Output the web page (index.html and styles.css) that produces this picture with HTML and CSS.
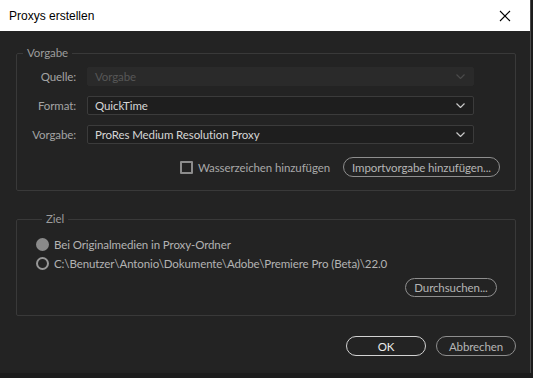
FILE: index.html
```html
<!DOCTYPE html>
<html lang="de">

<head>
    <meta name="viewport" content="width=device-width, initial-scale=1">
    <meta charset="utf-8">
    <link rel="stylesheet" href="styles.css">
</head>

<body>
    <div class="dialog">
        <div class="titlebar">
            <span class="title">Proxys erstellen</span>
            <svg class="close" width="12" height="12" viewBox="0 0 12 12">
                <path d="M1 1 L11 11 M11 1 L1 11" stroke="#000" stroke-width="1.1" fill="none" />
            </svg>
        </div>
        <div class="content">
            <fieldset class="group preset">
                <legend>Vorgabe</legend>
                <div class="rows">
                    <label class="lbl">Quelle:</label>
                    <div class="select disabled">
                        <span>Vorgabe</span>
                        <svg width="9" height="5" viewBox="0 0 9 5"><polyline points="0.5,0.5 4.5,4.5 8.5,0.5" /></svg>
                    </div>
                    <label class="lbl">Format:</label>
                    <div class="select">
                        <span>QuickTime</span>
                        <svg width="9" height="5" viewBox="0 0 9 5"><polyline points="0.5,0.5 4.5,4.5 8.5,0.5" /></svg>
                    </div>
                    <label class="lbl">Vorgabe:</label>
                    <div class="select">
                        <span>ProRes Medium Resolution Proxy</span>
                        <svg width="9" height="5" viewBox="0 0 9 5"><polyline points="0.5,0.5 4.5,4.5 8.5,0.5" /></svg>
                    </div>
                </div>
                <div class="actions">
                    <label class="check"><span class="box"></span>Wasserzeichen hinzufügen</label>
                    <button type="button" class="btn import">Importvorgabe hinzufügen...</button>
                </div>
            </fieldset>

            <fieldset class="group target">
                <legend>Ziel</legend>
                <label class="radio"><span class="dot filled"></span>Bei Originalmedien in Proxy-Ordner</label>
                <label class="radio"><span class="dot"></span>C:\Benutzer\Antonio\Dokumente\Adobe\Premiere Pro (Beta)\22.0</label>
                <div class="browse">
                    <button type="button" class="btn">Durchsuchen...</button>
                </div>
            </fieldset>

            <div class="footer">
                <button type="button" class="btn primary">OK</button>
                <button type="button" class="btn">Abbrechen</button>
            </div>
        </div>
    </div>
</body>

</html>
```

FILE: styles.css
```css
body {
    margin: 0;
    background: #1c1c1c;
    font-family: Lato, "Open Sans", sans-serif;
    font-size: 11.5px;
    letter-spacing: -0.1px;
}

.dialog {
    width: 530px;
    height: 373px;
    background: #232323;
    border-right: 1px solid #4a4a4a;
}

.titlebar {
    height: 31px;
    background: #fff;
    display: flex;
    align-items: center;
    justify-content: space-between;
    padding: 0 19px 0 9px;
}

.title {
    font-family: "Liberation Sans", Arial, sans-serif;
    font-size: 12px;
    letter-spacing: 0;
    color: #000;
    padding-top: 1px;
}

.close {
    margin-top: 1px;
}

.content {
    padding: 0 14px 0 16px;
}

.group {
    margin: 0;
    padding: 0;
    border: 1px solid #393939;
    border-radius: 2px;
}

.group legend {
    margin-left: 6px;
    padding: 0 4px;
    color: #9c9c9c;
    line-height: 16px;
}

.preset {
    margin-top: 14px;
    padding: 6px 15px 13px 0;
}

.rows {
    display: grid;
    grid-template-columns: 59px 387px;
    column-gap: 11px;
    row-gap: 10px;
    align-items: center;
}

.lbl {
    text-align: right;
    color: #a3a3a3;
}

.select {
    height: 19px;
    box-sizing: border-box;
    background: #1e1e1e;
    border: 1px solid #3b3b3b;
    border-radius: 2px;
    display: flex;
    align-items: center;
    justify-content: space-between;
    padding: 0 8px 0 7px;
    color: #d6d6d6;
}

.select svg polyline {
    fill: none;
    stroke: #c8c8c8;
    stroke-width: 1.2;
}

.select.disabled {
    background: #2a2a2a;
    border-color: #2a2a2a;
    color: #575757;
}

.select.disabled svg polyline {
    stroke: #4a4a4a;
}

.actions {
    display: flex;
    justify-content: flex-end;
    align-items: center;
    gap: 13px;
    margin-top: 13px;
}

.check {
    display: flex;
    align-items: center;
    gap: 5px;
    color: #a8a8a8;
}

.box {
    width: 13px;
    height: 13px;
    box-sizing: border-box;
    border: 2px solid #8c8c8c;
    border-radius: 1px;
}

.btn {
    height: 20px;
    box-sizing: border-box;
    background: transparent;
    border: 1px solid #8e8e8e;
    border-radius: 10px;
    color: #b5b5b5;
    font-family: inherit;
    font-size: 11.5px;
    letter-spacing: inherit;
    padding: 0;
    white-space: nowrap;
}

.import {
    width: 157px;
}

.target {
    margin-top: 20px;
    padding: 8px 18px 18px 19px;
}

.radio {
    display: flex;
    align-items: center;
    gap: 5px;
    height: 18px;
    margin-bottom: 1px;
    color: #b3b3b3;
}

.dot {
    width: 13px;
    height: 13px;
    box-sizing: border-box;
    border-radius: 50%;
    border: 2px solid #979797;
}

.dot.filled {
    background: #8a8a8a;
    border-color: #8a8a8a;
}

.browse {
    display: flex;
    justify-content: flex-end;
    margin-top: 6px;
}

.browse .btn {
    width: 92px;
    height: 19px;
}

.footer {
    display: flex;
    justify-content: flex-end;
    gap: 10px;
    margin-top: 20px;
}

.footer .btn {
    width: 80px;
}

.btn.primary {
    border-color: #d2d2d2;
    color: #ececec;
}
```
